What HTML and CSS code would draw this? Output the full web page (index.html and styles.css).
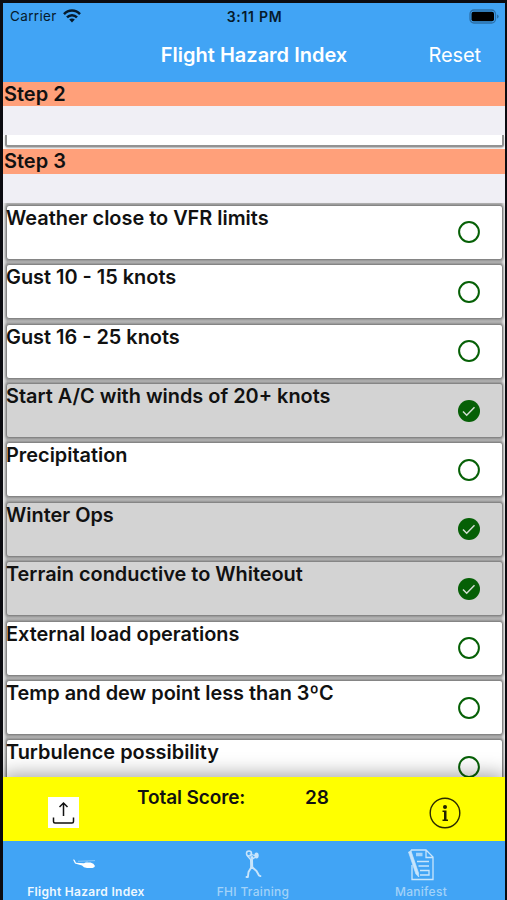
FILE: index.html
```html
<!DOCTYPE html>
<html lang="en">
<head>
  <meta charset="UTF-8">
  <title>Flight Hazard Index</title>
  <link rel="stylesheet" href="styles.css">
</head>
<body>

  <div class="phone">
    <header>
      <div class="status">
        <div class="carrier">
          <span>Carrier</span>
          <svg class="wifi" width="18" height="14" viewBox="0 0 18 14" fill="none" stroke="#061a2b" stroke-width="2.5">
            <path d="M1 5.2C5.5.4 12.500.4 17 5.200"/>
            <path d="M4 8.400C6.800 5.500 11.200 5.500 14 8.400"/>
            <path d="M6.200 10.600C7.800 9.100 10.200 9.100 11.800 10.600L9 13.400Z" fill="#061a2b" stroke="none"/>
          </svg>
        </div>
        <span class="time">3:11 PM</span>
        <svg class="battery" width="30" height="15" viewBox="0 0 30 15">
          <rect x="1" y="1" width="25.500" height="13" rx="4" fill="none" stroke="#2b6fa8" stroke-width="1.300"/>
          <rect x="2.500" y="2.700" width="22.500" height="9.600" rx="2" fill="#000"/>
          <path d="M28 5.500v4q1.700-.6 1.700-2t-1.700-2Z" fill="#2b6fa8"/>
        </svg>
      </div>
      <div class="navbar">
        <h1>Flight Hazard Index</h1>
        <span class="reset">Reset</span>
      </div>
    </header>

    <main>
      <h2>Step 2</h2>
      <div class="spacer"></div>
      <div class="last-row"><div class="card"></div></div>
      <h2>Step 3</h2>
      <div class="spacer step3"></div>
      <div id="listaItens"></div>
    </main>

    <section class="score">
      <div class="share">
        <svg width="31" height="31" viewBox="0 0 31 31" fill="none" stroke="#111" stroke-width="1.500">
          <path d="M15.500 19V6.500M11.500 10l4-4 4 4M5.500 20.500v4q0 1.500 1.500 1.500h17q1.500 0 1.500-1.500v-4"/>
        </svg>
      </div>
      <span class="total">Total Score:</span>
      <span class="value" id="total"></span>
      <svg class="about" width="32" height="32" viewBox="0 0 32 32">
        <circle cx="16" cy="16" r="14.800" fill="none" stroke="#2c2c00" stroke-width="1.400"/>
        <circle cx="16" cy="10" r="2" fill="#222200"/>
        <path d="M13.500 13.500h4v9h1.500v1.500h-5.500v-1.500h1.500v-7.500h-1.500Z" fill="#222200"/>
      </svg>
    </section>

    <nav>
      <div class="tab active">
        <svg width="36" height="34" viewBox="0 0 36 34" fill="#fff">
          <path d="M5 11.500l1.500.2 1.500 3 8 .6 1.500-.9h5q3.500.8 4.500 3.700-.4 1.700-2.500 1.800h-5.500q-3.500-.2-5-2.500L7 15.600Z"/>
          <path d="M10 13.300l17-.7M19 13v2" fill="none" stroke="#b4dcfb" stroke-width=".6"/>
        </svg>
        <span>Flight Hazard Index</span>
      </div>
      <div class="tab">
        <svg width="36" height="34" viewBox="0 0 36 34" fill="none" stroke="#c9e5fb" stroke-width="2" stroke-linecap="round" stroke-linejoin="round">
          <path d="M15 6l6 2" stroke-width="1.200"/>
          <circle cx="14" cy="5.500" r="2.500" stroke-width="1.500"/>
          <ellipse cx="21.500" cy="7.500" rx="2.200" ry="3" fill="#c9e5fb" stroke="none"/>
          <path d="M12.500 8l3.500 4 4-2.500" stroke-width="1.400"/>
          <circle cx="17" cy="9.500" r="1.500" fill="#c9e5fb" stroke="none"/>
          <path d="M16.500 12l.2 7" stroke-width="3"/>
          <path d="M16.500 19l-3 5-.6 5h-1.400M17 19l4.500 4 2.500 4.500 1.400.6" stroke-width="1.900"/>
        </svg>
        <span>FHI Training</span>
      </div>
      <div class="tab">
        <svg width="36" height="34" viewBox="0 0 36 34" fill="none" stroke="#c9e5fb" stroke-width="1.300">
          <path d="M7.500 3.500l1-1.500H23l7 7V31.500H9V17M23 2v7.500h7"/>
          <path d="M5.500 4l2.500-1 7.500 22 .3 4-2.900-3Z" fill="#c9e5fb" stroke-width=".7"/>
          <path d="M13 6.500h6.500" stroke-width="3.500" stroke-opacity=".75"/>
          <path d="M14 13.500h12M15.500 18h10.500M17 22.500h9v4.500h-9"/>
        </svg>
        <span>Manifest</span>
      </div>
    </nav>
  </div>

  <script>
    const lista = document.getElementById('listaItens');
    const itens = [
      { nome: 'Weather close to VFR limits', checked: false },
      { nome: 'Gust 10 - 15 knots', checked: false },
      { nome: 'Gust 16 - 25 knots', checked: false },
      { nome: 'Start A/C with winds of 20+ knots', checked: true },
      { nome: 'Precipitation', checked: false },
      { nome: 'Winter Ops', checked: true },
      { nome: 'Terrain conductive to Whiteout', checked: true },
      { nome: 'External load operations', checked: false },
      { nome: 'Temp and dew point less than 3ºC', checked: false },
      { nome: 'Turbulence possibility', checked: false }
    ];

    const vazio = '<circle cx="12" cy="12" r="9.900" fill="none" stroke="#066006" stroke-width="2"/>';
    const marcado = '<circle cx="12" cy="12" r="11" fill="#066006"/><path d="M6 12.500l3.700 3.700 7.800-8" fill="none" stroke="#d3ddd3" stroke-width="1.500"/>';

    itens.forEach(item => {
      const div = document.createElement('div');
      div.className = 'row';
      div.innerHTML = `
        <div class="card ${item.checked ? 'checked' : ''}">
          <span>${item.nome}</span>
          <svg width="24" height="24" viewBox="0 0 24 24">${item.checked ? marcado : vazio}</svg>
        </div>
      `;
      lista.appendChild(div);
    });

    document.getElementById('total').textContent = 28;
  </script>
</body>
</html>
```
FILE: styles.css
```css
* { box-sizing: border-box; }

body {
  margin: 0;
  font-family: Inter, 'Liberation Sans', sans-serif;
  color: #111;
  background: #0b0b10;
}

.phone {
  width: 507px;
  height: 900px;
  padding: 3px 2px 0 3px;
  display: flex;
  flex-direction: column;
  overflow: hidden;
}

header {
  flex: none;
  height: 78.5px;
  background: #41a4f5;
}

.status {
  height: 26px;
  padding: 0 6px 0 7px;
  display: grid;
  grid-template-columns: 1fr auto 1fr;
  align-items: center;
  font-size: 13.5px;
  color: #061a2b;
}

.carrier {
  display: flex;
  align-items: center;
  gap: 6px;
  letter-spacing: 0.35px;
}

.time {
  font-size: 14px;
  font-weight: 600;
  letter-spacing: 0.7px;
}

.battery {
  justify-self: end;
}

.navbar {
  height: 52.5px;
  padding: 0 24px 0 0;
  display: grid;
  grid-template-columns: 1fr auto 1fr;
  align-items: center;
  color: #fff;
}

h1 {
  grid-column: 2;
  margin: 0 -24px 0 0;
  font-size: 20px;
  font-weight: 600;
}

.reset {
  justify-self: end;
  font-size: 20px;
  letter-spacing: -0.1px;
}

main {
  flex: 1;
  min-height: 0;
  overflow: hidden;
  background: #fff;
}

h2 {
  margin: 0;
  height: 24.5px;
  padding-left: 1px;
  font-size: 20px;
  line-height: 25px;
  font-weight: 600;
  color: #111;
  background: #ffa07a;
}

.spacer {
  height: 29px;
  background: #f0eff5;
}

.spacer.step3 {
  height: 29.4px;
}

/* tail of the previous section, scrolled under its header */
.last-row {
  height: 14px;
  padding: 0 1px 2px 2px;
  overflow: hidden;
}

.row {
  height: 59.4px;
  padding: 2px 2px 2.4px 3px;
  background: linear-gradient(to right, #eee, #b6b6b6 4px, #b6b6b6 498px, #eee);
}

.card {
  height: 55px;
  padding: 0 21px 0 0;
  display: flex;
  justify-content: space-between;
  border: 1px solid #858585;
  border-radius: 3px;
  background: #fff;
  box-shadow: 0 0 2px 1px rgba(80, 80, 80, 0.35);
}

.last-row .card {
  height: 12px;
  border: 2px solid #929292;
  border-top: none;
  border-radius: 0 0 3px 3px;
  box-shadow: 0 1px 2px #aaa;
}

.card span {
  margin-left: -1px;
  font-size: 19.9px;
  line-height: 25px;
  font-weight: 600;
  white-space: nowrap;
}

.card svg {
  align-self: center;
}

.card.checked {
  background: #d3d3d3;
}

.score {
  flex: none;
  height: 64px;
  display: grid;
  grid-template-columns: 45px 89px 168px 124px 1fr;
  background: #ff0;
  font-size: 19px;
  font-weight: 600;
  line-height: 24px;
  z-index: 1;
  box-shadow: 0 -3px 18px rgba(0, 0, 0, 0.35);
}

.share {
  grid-column: 2;
  width: 31px;
  height: 31px;
  margin-top: 20px;
  background: #fff;
}

.total, .value {
  margin-top: 9px;
}

.total {
  letter-spacing: -0.1px;
}

.about {
  margin-top: 20px;
}

nav {
  flex: none;
  height: 59px;
  display: grid;
  grid-template-columns: 166px 168px 168px;
  background: #41a4f5;
  z-index: 2;
}

.tab {
  padding-top: 7px;
  display: flex;
  flex-direction: column;
  align-items: center;
  font-size: 12px;
  font-weight: 500;
  line-height: 20px;
  letter-spacing: 0.3px;
  white-space: nowrap;
  color: #a2d2f8;
}

.tab.active {
  font-weight: 600;
  color: #eef8ff;
}
```
